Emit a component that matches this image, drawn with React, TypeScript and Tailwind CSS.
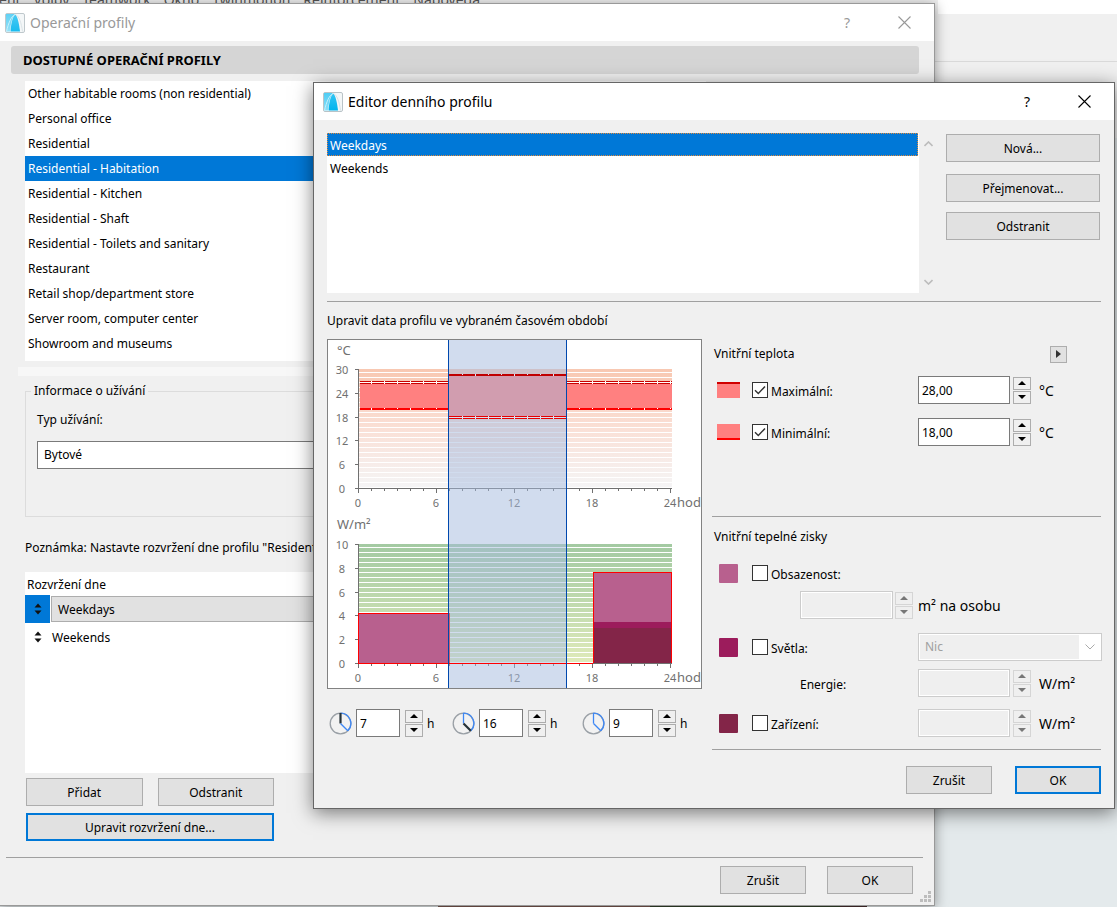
import React from 'react';

const profiles = [
  'Other habitable rooms (non residential)',
  'Personal office',
  'Residential',
  'Residential - Habitation',
  'Residential - Kitchen',
  'Residential - Shaft',
  'Residential - Toilets and sanitary',
  'Restaurant',
  'Retail shop/department store',
  'Server room, computer center',
  'Showroom and museums',
];

const menu = ['ent', 'Volby', 'Teamwork', 'Okno', 'Twinmotion', 'Reinforcement', 'Nápověda'];

const range = (n: number) => Array.from({ length: n }, (_, i) => i);

function AppIcon({ dim = false }: { dim?: boolean }) {
  return (
    <svg width="20" height="20" viewBox="0 0 20 20" className={dim ? 'opacity-90' : ''}>
      <defs>
        <linearGradient id="arc" x1="0" y1="0" x2="0" y2="1">
          <stop offset="0" stopColor="#35c5f3" />
          <stop offset="1" stopColor="#00b4ee" />
        </linearGradient>
        <linearGradient id="sheet" x1="0" y1="0" x2="0" y2="1">
          <stop offset="0" stopColor="#4fcdf4" />
          <stop offset="1" stopColor="#8adff8" />
        </linearGradient>
      </defs>
      <rect x="0.500" y="0.500" width="19" height="19" rx="1.500" fill="#f3f7f8" stroke="#b9c3c7" />
      <path d="M1 1H10C7 4 6 10 5 18.500H1Z" fill="url(#sheet)" />
      <path d="M10 1.500C12.500 3 14 10 15 18.500H5.500C6 11 7.500 4 10 1.500Z" fill="url(#arc)" />
      <path d="M1.500 18.500C3.500 10 6 3.500 10 1.500" fill="none" stroke="#c4f0fc" />
      <path d="M10.500 1.500C14 3 16.500 10 17.500 18.500" fill="none" stroke="#d8e1e5" />
    </svg>
  );
}

function TitleBar({ title, inactive = false }: { title: string; inactive?: boolean }) {
  return (
    <div className={`flex h-[37px] items-center bg-white pr-[22px] ${inactive ? 'pl-[5px] text-[#999]' : 'pl-[9px] text-black'}`}>
      <AppIcon dim={inactive} />
      <h1 className="ml-[5px] flex-1 text-[14px]">{title}</h1>
      <button type="button" aria-label="Help" className="w-4 text-[14px]">?</button>
      <button type="button" aria-label="Close" className="ml-[41px] flex w-4 justify-center">
        <svg width="13" height="13" viewBox="0 0 13 13">
          <path d="M0.500 0.500L12.500 12.500M12.500 0.500L0.500 12.500" stroke="currentColor" strokeWidth="1.100" />
        </svg>
      </button>
    </div>
  );
}

function Btn({ children, primary = false, className = '' }: { children: React.ReactNode; primary?: boolean; className?: string }) {
  return (
    <button
      type="button"
      className={`flex h-7 items-center justify-center bg-[#e1e1e1] pt-[2px] ${primary ? 'border-2 border-[#0078d7]' : 'border border-[#adadad]'} ${className}`}
    >
      {children}
    </button>
  );
}

function Spinner({ disabled = false, name }: { disabled?: boolean; name: string }) {
  const look = `flex h-[13px] w-[18px] items-center justify-center border ${
    disabled ? 'border-[#d5d5d5] bg-[#efefef] text-[#777]' : 'border-[#adadad] bg-[#f0f0f0] text-black'
  }`;
  return (
    <span className="flex flex-col gap-px">
      <button type="button" disabled={disabled} aria-label={`${name} +`} className={look}>
        <svg width="8" height="4" viewBox="0 0 8 4"><path d="M0 4L4 0L8 4Z" fill="currentColor" /></svg>
      </button>
      <button type="button" disabled={disabled} aria-label={`${name} -`} className={look}>
        <svg width="8" height="4" viewBox="0 0 8 4"><path d="M0 0L4 4L8 0Z" fill="currentColor" /></svg>
      </button>
    </span>
  );
}

function Field({ value = '', name, disabled = false, className }: { value?: string; name: string; disabled?: boolean; className: string }) {
  return (
    <input
      type="text"
      aria-label={name}
      defaultValue={value}
      disabled={disabled}
      className={`h-7 border px-[3px] ${
        disabled ? 'border-[#cccccc] bg-[#efefef] outline-1 -outline-offset-2 outline-white' : 'border-[#7a7a7a] bg-white'
      } ${className}`}
    />
  );
}

function Check({ label, checked = false }: { label: string; checked?: boolean }) {
  return (
    <label className="flex items-center gap-[3px]">
      <span className="relative flex">
        <input
          type="checkbox"
          defaultChecked={checked}
          className="peer h-4 w-4 appearance-none border border-[#333] bg-white"
        />
        <svg width="16" height="16" viewBox="0 0 16 16" className="pointer-events-none absolute inset-0 hidden peer-checked:block">
          <path d="M3 8.200L6.300 11.500L13 4.500" fill="none" stroke="#333" strokeWidth="1.400" />
        </svg>
      </span>
      <span className="pt-1">{label}</span>
    </label>
  );
}

function Clock({ from, to }: { from: boolean; to: boolean }) {
  return (
    <svg width="23" height="23" viewBox="0 0 23 23">
      <circle cx="11.500" cy="11.500" r="10.300" fill="#f2f2f2" stroke="#9aa0a6" strokeWidth="1.300" />
      <path d="M11.500 1.200A10.300 10.300 0 0 1 18.800 18.800" fill="none" stroke="#3d87f5" strokeWidth="1.300" />
      <path d="M11.500 1V11.500" stroke={from ? '#263238' : '#3d87f5'} strokeWidth={from ? 2.2 : 1.3} />
      <path d="M11.500 11.500L18.800 18.800" stroke={to ? '#263238' : '#3d87f5'} strokeWidth={to ? 2.2 : 1.3} />
    </svg>
  );
}

function Axes({ top, labels }: { top: number; labels: string[] }) {
  return (
    <g shapeRendering="crispEdges">
      <path d={`M31.500 ${top}V${top + 120}M31 ${top + 119.5}H345`} stroke="#707070" />
      {range(25).map((i) => (
        <path key={i} d={`M${31.5 + i * 13} ${top + 119}v${i % 6 === 0 ? 5 : 3}`} stroke="#707070" />
      ))}
      {labels.map((t, i) => (
        <g key={t}>
          <path d={`M28 ${top + 0.5 + Math.round(i * 23.8)}h4`} stroke="#707070" />
          <text x="15" y={top + 5 + Math.round(i * 23.8)} textAnchor="middle">{t}</text>
        </g>
      ))}
      {range(5).map((i) => (
        <text key={i} x={i === 4 ? 343 : 31 + i * 78} y={top + 138} textAnchor="middle">{i * 6}</text>
      ))}
      <text x="350" y={top + 138} className="text-[13px]">hod</text>
    </g>
  );
}

function ProfileChart() {
  return (
    <div className="h-[350px] w-[375px] border border-[#828282] bg-white">
      <svg viewBox="1 1 373 348" className="block h-full w-full fill-[#707070] text-[11px]">
        <defs>
          <linearGradient id="warm" x1="0" y1="0" x2="0" y2="1">
            <stop offset="0" stopColor="#f8c8b2" />
            <stop offset="0.5" stopColor="#fae0d6" />
            <stop offset="1" stopColor="#f5f5f6" />
          </linearGradient>
          <linearGradient id="green" x1="0" y1="0" x2="0" y2="1">
            <stop offset="0" stopColor="#a3caa2" />
            <stop offset="1" stopColor="#dfeaba" />
          </linearGradient>
        </defs>

        <text x="10" y="16" className="text-[13px]">°C</text>
        <text x="10" y="190" className="text-[13px]">W/m²</text>

        <g shapeRendering="crispEdges">
          <rect x="32" y="30" width="313" height="119" fill="url(#warm)" />
          <rect x="32" y="205" width="313" height="119" fill="url(#green)" />
          {range(24).map((i) => (
            <path key={i} d={`M32 ${33.5 + i * 5}H345M32 ${208.5 + i * 5}H345`} stroke="#fff" />
          ))}

          {/* comfort band outside the selected hours */}
          <path d="M33 44H122V70H33ZM240 44H345V70H240Z" fill="#ff8080" />
          <path d="M33 43.500H345" stroke="#fff" strokeWidth="3" />
          <path d="M33 42.500H345M33 44.500H345" stroke="#c80000" />
          <path d="M33 70H345" stroke="#f00" strokeWidth="2" />
          {range(24).map((i) => (
            <path key={i} d={`M${44.5 + i * 13} 42v3M${44.5 + i * 13} 69v${i % 3 === 0 ? 2 : 1}`} stroke="#fff" />
          ))}
        </g>

        <g shapeRendering="crispEdges">
          <rect x="31.500" y="274.500" width="91" height="50" fill="#b8608e" stroke="#f00" />
          <rect x="266.500" y="233.500" width="78" height="91" fill="#b8608e" stroke="#f00" />
          <rect x="267" y="283" width="77" height="6" fill="#9c1c5c" />
          <rect x="267" y="289" width="77" height="35" fill="#832548" />
        </g>

        <Axes top={30} labels={['30', '24', '18', '12', '6', '0']} />
        <Axes top={205} labels={['10', '8', '6', '4', '2', '0']} />

        <g shapeRendering="crispEdges">
          {/* selected period */}
          <path d="M122 35H239V80H122Z" fill="#fff" />
          <rect x="122" y="30" width="117" height="6" fill="#f8c8b2" />
          <rect x="122" y="36" width="117" height="43" fill="#ff8080" />
          <rect x="122" y="1" width="117" height="348" fill="#a3b9de" fillOpacity="0.500" />
          <path d="M122 36H239" stroke="#c00000" strokeWidth="2" />
          <path d="M122 78.500H239" stroke="#d5dff0" strokeWidth="3" />
          <path d="M122 77.500H239M122 79.500H239" stroke="#e60000" />
          {range(8).map((i) => (
            <path key={i} d={`M${135.5 + i * 13} 35v${i % 3 === 1 ? 2 : 1}M${135.5 + i * 13} 77v3`} stroke="#dbe4f2" />
          ))}
          <path d="M31 324.500H266M31.500 274V324M266.500 234V324M344.500 234V324" stroke="#f00" />
          <path d="M121.500 1V349M239.500 1V349" stroke="#0048ae" />
        </g>
      </svg>
    </div>
  );
}

function HourField({ name, value, from = false, to = false }: { name: string; value: string; from?: boolean; to?: boolean }) {
  return (
    <div className="flex items-center">
      <Clock from={from} to={to} />
      <Field name={name} value={value} className="ml-1 w-11" />
      <span className="ml-[5px] mr-1"><Spinner name={name} /></span>
      <span className="pt-px">h</span>
    </div>
  );
}

function TempRow({ label, value, upper = false }: { label: string; value: string; upper?: boolean }) {
  return (
    <div className="flex h-7 items-center pl-[5px]">
      <span className={`h-4 w-[23px] bg-[#ff8080] ${upper ? 'border-t-2 border-[#d00000]' : 'border-b-2 border-[#f00]'}`} />
      <span className="ml-3 flex-1"><Check label={label} checked /></span>
      <Field name={label} value={value} className="w-[92px]" />
      <span className="ml-[3px]"><Spinner name={label} /></span>
      <span className="ml-2 w-[62px] text-[14px]">°C</span>
    </div>
  );
}

function SmallArrows() {
  return (
    <svg width="8" height="12" viewBox="0 0 8 12">
      <path d="M4 0.500L7.500 4.500H0.500ZM4 11.500L7.500 7.500H0.500Z" fill="#111" />
    </svg>
  );
}

function ProfilesWindow() {
  return (
    <section className="absolute left-0 right-[182px] top-[3px] border-y border-r border-[#999] bg-[#f0f0f0] shadow-[0_2px_12px_rgba(0,0,0,0.4)]">
      <TitleBar title="Operační profily" inactive />
      <h2 className="ml-[11px] mr-[15px] mt-[5px] flex h-7 items-center rounded-[3px] bg-[#d5d5d5] pl-3 pt-px text-[13px] font-bold">
        DOSTUPNÉ OPERAČNÍ PROFILY
      </h2>

      <ul role="listbox" aria-label="Operační profily" className="ml-[25px] mr-[228px] mt-[7px] h-[280px] bg-white">
        {profiles.map((p, i) => (
          <li
            key={p}
            role="option"
            aria-selected={i === 3}
            className={`flex h-[25px] items-center pl-[3px] pt-px ${i === 3 ? 'bg-[#0078d7] text-white' : ''}`}
          >
            {p}
          </li>
        ))}
      </ul>

      <div className="ml-[18px] mr-[15px] mt-[6px] h-[9px] bg-[#f7f7f7]" />

      <fieldset className="ml-[25px] mr-[15px] mt-[5px] h-[136px] border border-[#dcdcdc] pl-[11px]">
        <legend className="-ml-[6px] px-[3px] leading-5">Informace o užívání</legend>
        <label className="block pt-[9px] leading-5" htmlFor="usage">Typ užívání:</label>
        <select id="usage" className="mt-[11px] h-7 w-[400px] appearance-none border border-[#7a7a7a] bg-white px-[6px]">
          <option>Bytové</option>
        </select>
      </fieldset>

      <p className="ml-[25px] mt-[21px] leading-5">Poznámka: Nastavte rozvržení dne profilu "Residential - Habitation"</p>

      <div className="ml-[25px] mr-[228px] mt-[14px] h-[201px] bg-white">
        <p className="h-[23px] pl-[2px] leading-[26px]">Rozvržení dne</p>
        <div className="flex h-7 items-center">
          <span className="flex h-full w-[25px] items-center justify-center bg-[#0078d7]"><SmallArrows /></span>
          <button type="button" className="ml-px h-[26px] flex-1 border border-[#adadad] bg-[#e1e1e1] pl-[6px] pt-[2px] text-left">Weekdays</button>
        </div>
        <div className="flex h-7 items-center">
          <span className="flex w-[25px] justify-center"><SmallArrows /></span>
          <button type="button" className="ml-[2px] pt-[2px]">Weekends</button>
        </div>
      </div>

      <div className="ml-[26px] mt-[5px] grid w-[248px] grid-cols-2 gap-x-[15px] gap-y-[7px]">
        <Btn>Přidat</Btn>
        <Btn>Odstranit</Btn>
        <Btn primary className="col-span-2">Upravit rozvržení dne...</Btn>
      </div>

      <div className="ml-[6px] mr-[11px] mt-4 flex justify-end gap-[21px] border-t border-[#a0a0a0] pb-[11px] pr-[10px] pt-2">
        <Btn className="w-[86px]">Zrušit</Btn>
        <Btn className="w-[86px]">OK</Btn>
      </div>
      <svg width="12" height="12" viewBox="0 0 12 12" className="absolute bottom-[2px] right-[2px]">
        <path d="M8 0h3v3h-3zM4 4h3v3h-3zM8 4h3v3h-3zM0 8h3v3h-3zM4 8h3v3h-3zM8 8h3v3h-3z" fill="#bdbdbd" />
      </svg>
    </section>
  );
}

function HeatGains() {
  return (
    <div className="flex flex-col">
      <h3 className="mt-[10px] pl-[2px] leading-5">Vnitřní tepelné zisky</h3>
      <div className="mt-[15px] flex items-center pl-[7px]">
        <span className="h-[19px] w-[19px] rounded-[1px] bg-[#b8608e]" />
        <span className="ml-[14px]"><Check label="Obsazenost:" /></span>
      </div>
      <div className="mt-[7px] flex items-center pl-[88px]">
        <Field name="Obsazenost" disabled className="w-[93px]" />
        <span className="ml-[2px]"><Spinner name="Obsazenost" disabled /></span>
        <span className="ml-[5px] text-[14px]">m² na osobu</span>
      </div>
      <div className="mt-[14px] flex items-center pl-[7px]">
        <span className="h-[19px] w-[19px] rounded-[1px] bg-[#9c1c5c]" />
        <span className="ml-[14px] flex-1"><Check label="Světla:" /></span>
        <span className="relative -mr-px flex">
          <select aria-label="Světla" disabled className="h-7 w-[184px] appearance-none border border-[#cccccc] bg-[#efefef] px-[6px] text-[#a0a0a0] opacity-100 outline-1 -outline-offset-2 outline-white">
            <option>Nic</option>
          </select>
          <span className="pointer-events-none absolute inset-y-px right-px flex w-[22px] items-center justify-center bg-white">
            <svg width="10" height="6" viewBox="0 0 10 6"><path d="M0.500 0.500L5 5L9.500 0.500" fill="none" stroke="#aaa" /></svg>
          </span>
        </span>
      </div>
      <div className="mt-2 flex items-center pl-[88px]">
        <span className="flex-1 pt-1">Energie:</span>
        <Field name="Energie" disabled className="w-[92px]" />
        <span className="ml-[3px]"><Spinner name="Energie" disabled /></span>
        <span className="ml-2 w-[62px] text-[14px]">W/m²</span>
      </div>
      <div className="mt-3 flex items-center pl-[7px]">
        <span className="h-[19px] w-[19px] rounded-[1px] bg-[#832548]" />
        <span className="ml-[14px] flex-1"><Check label="Zařízení:" /></span>
        <Field name="Zařízení" disabled className="w-[92px]" />
        <span className="ml-[3px]"><Spinner name="Zařízení" disabled /></span>
        <span className="ml-2 w-[62px] text-[14px]">W/m²</span>
      </div>
    </div>
  );
}

function DayEditor() {
  return (
    <section className="absolute left-[313px] right-[2px] top-[82px] border border-[#666] bg-[#f0f0f0] shadow-[0_4px_18px_rgba(0,0,0,0.5)]">
      <TitleBar title="Editor denního profilu" />
      <div className="px-[13px] pb-[14px] pt-[13px]">
        <div className="flex border-b border-[#a0a0a0] pb-2">
          <ul role="listbox" aria-label="Denní profily" className="h-[160px] flex-1 bg-white pr-px">
            <li role="option" aria-selected className="flex h-[23px] items-center border border-dotted border-[#e08a3c] bg-[#0078d7] pl-[2px] pt-[2px] text-white">Weekdays</li>
            <li role="option" aria-selected={false} className="flex h-[23px] items-center pl-[3px] pt-[2px]">Weekends</li>
          </ul>
          <div className="flex w-[18px] flex-col items-center justify-between py-2">
            <svg width="9" height="6" viewBox="0 0 9 6"><path d="M0.500 5L4.500 1L8.500 5" fill="none" stroke="#bcbcbc" strokeWidth="1.600" /></svg>
            <svg width="9" height="6" viewBox="0 0 9 6"><path d="M0.500 1L4.500 5L8.500 1" fill="none" stroke="#bcbcbc" strokeWidth="1.600" /></svg>
          </div>
          <div className="ml-[9px] mr-px mt-px flex w-[154px] flex-col">
            <Btn>Nová...</Btn>
            <Btn className="mt-3">Přejmenovat...</Btn>
            <Btn className="mt-[10px]">Odstranit</Btn>
          </div>
        </div>
        <p className="mt-[9px] leading-5">Upravit data profilu ve vybraném časovém období</p>

        <div className="mt-2 flex gap-[10px]">
          <div>
            <ProfileChart />
            <div className="mt-5 grid grid-cols-[123px_130px_auto] pl-[2px]">
              <HourField name="Od" value="7" from />
              <HourField name="Do" value="16" to />
              <HourField name="Délka" value="9" />
            </div>
          </div>
          <div className="flex-1">
            <div className="h-[178px] border-b border-[#a0a0a0]">
              <div className="flex items-center justify-between pl-[2px] pr-[34px] pt-[5px]">
                <h3 className="leading-5">Vnitřní teplota</h3>
                <button type="button" aria-label="Více" className="flex h-[17px] w-[17px] items-center justify-center border border-[#adadad] bg-[#e1e1e1]">
                  <svg width="5" height="8" viewBox="0 0 5 8"><path d="M0 0L5 4L0 8Z" fill="#333" /></svg>
                </button>
              </div>
              <div className="mt-3 flex flex-col gap-[14px]">
                <TempRow label="Maximální:" value="28,00" upper />
                <TempRow label="Minimální:" value="18,00" />
              </div>
            </div>
            <div className="border-b border-[#a0a0a0] pb-3">
              <HeatGains />
            </div>
          </div>
        </div>

        <div className="mt-4 flex justify-end gap-[23px]">
          <Btn className="w-[86px]">Zrušit</Btn>
          <Btn primary className="w-[86px]">OK</Btn>
        </div>
      </div>
    </section>
  );
}

export default function App() {
  return (
    <main className="relative flex h-screen flex-col overflow-hidden bg-[#e4eaec] font-['Noto_Sans',sans-serif] text-[12px] text-black">
      <div className="flex h-[14px] items-end bg-white">
        <nav className="flex h-full w-[84%] gap-[14px] bg-[#f0f0f0] text-[14px] leading-none text-[#555]">
          {menu.map((m) => (
            <a key={m} href="#" className="-ml-px -mt-[7px]">{m}</a>
          ))}
        </nav>
      </div>
      <div className="h-[48px] border-b border-[#dadada] bg-[#f0f0f0]" />
      <div className="h-[76px] bg-[#f0f0f0]" />
      <div className="flex-1" />
      <div className="flex h-[2px] pl-[438px]">
        <div className="w-[212px] bg-[#7d5a50]" />
        <div className="w-[190px] bg-[#33432a]" />
        <div className="w-[27px] bg-[#4a3030]" />
      </div>
      <ProfilesWindow />
      <DayEditor />
    </main>
  );
}
